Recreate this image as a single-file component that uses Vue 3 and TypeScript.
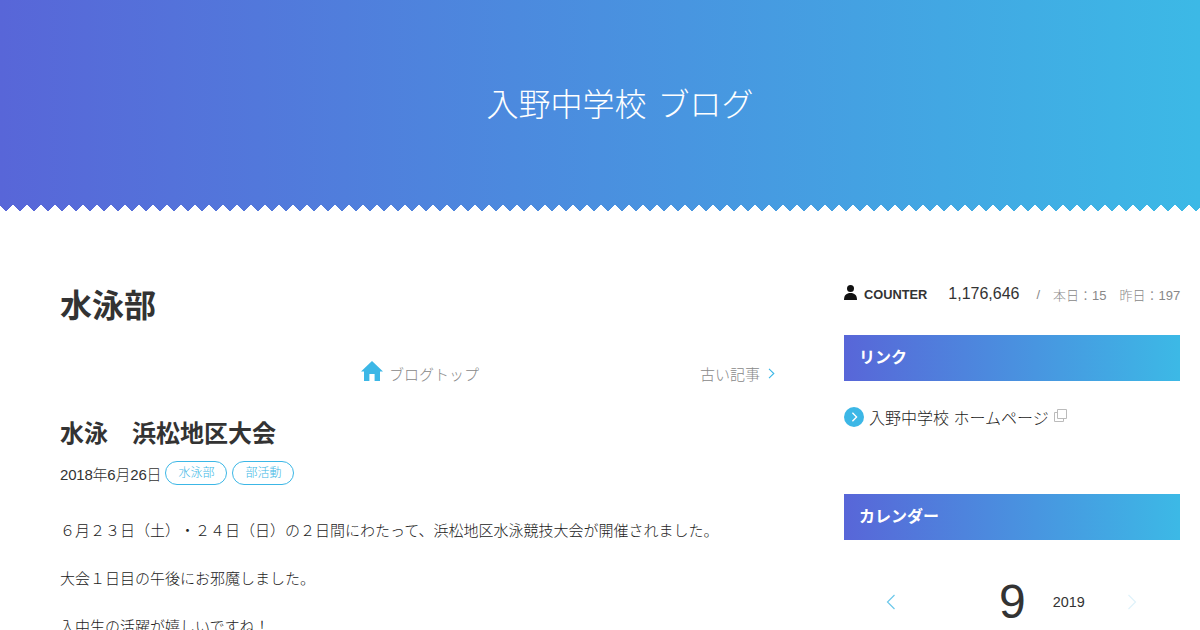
<template>
  <div class="page">
    <header class="hero">
      <h1 class="hero__title">入野中学校 ブログ</h1>
      <div class="hero__edge"></div>
    </header>

    <div class="layout">
      <main class="main">
        <h2 class="main__category">水泳部</h2>

        <nav class="pager">
          <a class="pager__top">
            <svg class="pager__home" viewBox="0 0 22 20" width="22" height="20">
              <path d="M11 0 L22 10.5 L19 10.5 L19 20 L13.6 20 L13.6 13 L8.4 13 L8.4 20 L3 20 L3 10.5 L0 10.5 Z" fill="#3cb7e6" />
            </svg>
            <span>ブログトップ</span>
          </a>
          <a class="pager__old">
            <span>古い記事</span>
            <svg viewBox="0 0 7 11" width="7" height="11">
              <path d="M1 .8 L5.8 5.5 L1 10.2" fill="none" stroke="#3cb7e6" stroke-width="1.1" />
            </svg>
          </a>
        </nav>

        <article class="post">
          <h3 class="post__title">水泳　浜松地区大会</h3>
          <div class="post__meta">
            <span class="post__date">2018年6月26日</span>
            <a v-for="tag in tags" :key="tag" class="post__tag">{{ tag }}</a>
          </div>
          <p v-for="line in lines" :key="line" class="post__line">{{ line }}</p>
        </article>
      </main>

      <aside class="side">
        <div class="counter">
          <svg class="counter__icon" viewBox="0 0 13 15" width="13" height="15">
            <circle cx="6.5" cy="3.6" r="3.5" fill="#111" />
            <path d="M0 15 C0 10 2.5 8 6.5 8 C10.5 8 13 10 13 15 Z" fill="#111" />
          </svg>
          <span class="counter__label">COUNTER</span>
          <span class="counter__total">1,176,646</span>
          <span class="counter__sep">/</span>
          <span class="counter__sub">本日：15</span>
          <span class="counter__sub">昨日：197</span>
        </div>

        <section class="widget widget--links">
          <h4 class="widget__title">リンク</h4>
          <a class="link">
            <span class="link__bullet">
              <svg viewBox="0 0 8 12" width="7" height="10">
                <path d="M1.5 1 L6.5 6 L1.5 11" fill="none" stroke="#fff" stroke-width="1.6" />
              </svg>
            </span>
            <span>入野中学校 ホームページ</span>
            <svg class="link__ext" viewBox="0 0 13 13" width="13" height="13">
              <path d="M3.5 .5 H12.5 V9.5 H3.5 Z M.5 3.5 H3.5 M.5 3.5 V12.5 H9.5 V9.5" fill="none" stroke="#bbb" stroke-width="1" />
            </svg>
          </a>
        </section>

        <section class="widget">
          <h4 class="widget__title">カレンダー</h4>
          <div class="calendar">
            <svg class="calendar__prev" viewBox="0 0 10 16" width="10" height="16">
              <path d="M8.5 1 L1.5 8 L8.5 15" fill="none" stroke="#6cc8ea" stroke-width="1.2" />
            </svg>
            <span class="calendar__month">9</span>
            <span class="calendar__year">2019</span>
            <svg class="calendar__next" viewBox="0 0 10 16" width="10" height="16">
              <path d="M1.5 1 L8.5 8 L1.5 15" fill="none" stroke="#dff2fa" stroke-width="1.2" />
            </svg>
          </div>
        </section>
      </aside>
    </div>
  </div>
</template>

<script setup lang="ts">
const tags: string[] = ['水泳部', '部活動'];

const lines: string[] = [
  '６月２３日（土）・２４日（日）の２日間にわたって、浜松地区水泳競技大会が開催されました。',
  '大会１日目の午後にお邪魔しました。',
  '入中生の活躍が嬉しいですね！',
];
</script>

<style>
html,
body {
  margin: 0;
  background: #fff;
  overflow: hidden;
}
</style>

<style scoped>
.page {
  width: 1200px;
  height: 630px;
  overflow: hidden;
  color: #222;
  font-family: "Liberation Sans", "Noto Sans CJK JP", sans-serif;
  font-weight: 300;
  text-spacing-trim: space-all;
}

/* Header */
.hero {
  position: relative;
  height: 211px;
  box-sizing: border-box;
  padding: 82px 0 0 40px;
  background: linear-gradient(90deg, #5866d8, #3cb9e6);
  text-align: center;
}

.hero__title {
  margin: 0;
  color: #fff;
  font-size: 32px;
  font-weight: 300;
  word-spacing: 2px;
  line-height: 46px;
}

.hero__edge {
  position: absolute;
  left: -1px;
  right: 0;
  bottom: 0;
  height: 7px;
  background:
    linear-gradient(45deg, #fff 50%, transparent 50%) 0 0 / 14px 14px repeat-x,
    linear-gradient(-45deg, #fff 50%, transparent 50%) 0 0 / 14px 14px repeat-x;
}

/* Columns */
.layout {
  display: flex;
  padding: 0 20px 0 60px;
}

.main {
  width: 720px;
  margin-right: 64px;
}

.main__category {
  margin: 72px 0 0;
  color: #333;
  font-size: 32px;
  font-weight: 700;
  line-height: 46px;
}

.pager {
  display: flex;
  justify-content: space-between;
  align-items: center;
  height: 32px;
  margin-top: 28px;
  padding-left: 301px;
  color: #888;
  font-size: 15px;
}

.pager__top {
  display: flex;
  align-items: center;
  gap: 6px;
}

.pager__home {
  margin-top: -4px;
}

.pager__old {
  display: flex;
  align-items: center;
  gap: 8px;
  margin-right: 5px;
}

.post__title {
  margin: 28px 0 0;
  color: #333;
  font-size: 24px;
  font-weight: 700;
  line-height: 34px;
}

.post__meta {
  display: flex;
  align-items: center;
  gap: 5px;
  margin-top: 10px;
  height: 24px;
  font-size: 15px;
}

.post__date {
  color: #333;
  letter-spacing: -0.2px;
  margin-right: -1px;
}

.post__tag {
  box-sizing: border-box;
  height: 24px;
  padding: 0 12px;
  border: 1px solid #3cb7e6;
  border-radius: 12px;
  color: #3cb7e6;
  font-size: 12px;
  line-height: 22px;
}

.post__line {
  margin: 0 0 20px;
  font-size: 15px;
  line-height: 28px;
}

.post__meta + .post__line {
  margin-top: 32px;
}

/* Sidebar */
.side {
  flex: none;
  width: 336px;
}

.counter {
  display: flex;
  align-items: center;
  height: 24px;
  margin-top: 71px;
}

.counter__icon {
  flex: none;
  margin-top: -4px;
  margin-right: 7px;
}

.counter__label {
  color: #333;
  font-size: 12.8px;
  font-weight: 700;
}

.counter__total {
  margin-left: 21px;
  color: #333;
  font-size: 16px;
}

.counter__sep {
  margin: 0 13px 0 17px;
  color: #888;
  font-size: 13px;
}

.counter__sub {
  margin-right: 13px;
  color: #888;
  font-size: 13px;
  white-space: nowrap;
}

.counter__sub:last-child {
  margin-right: 0;
}

.widget__title {
  margin: 0;
  height: 46px;
  padding-left: 15px;
  background: linear-gradient(90deg, #5866d8, #3cb9e6);
  color: #fff;
  font-size: 16px;
  font-weight: 700;
  line-height: 46px;
}

.widget {
  margin-top: 65px;
}

.widget--links {
  margin-top: 29px;
}

.link {
  display: flex;
  align-items: center;
  height: 24px;
  margin-top: 24px;
  font-size: 16px;
}

.link__bullet {
  display: flex;
  flex: none;
  align-items: center;
  justify-content: center;
  width: 20px;
  height: 20px;
  margin-right: 5px;
  border-radius: 50%;
  background: #3cb7e6;
}

.link__ext {
  margin: -3px 0 0 5px;
}

.calendar {
  display: flex;
  align-items: center;
  height: 72px;
  margin-top: 26px;
}

.calendar__prev {
  flex: none;
  margin-left: 42px;
}

.calendar__month {
  margin-left: 103px;
  color: #333;
  font-size: 48px;
  line-height: 72px;
}

.calendar__year {
  margin-left: 27px;
  color: #333;
  font-size: 14.4px;
}

.calendar__next {
  flex: none;
  margin-left: 42px;
}
</style>
